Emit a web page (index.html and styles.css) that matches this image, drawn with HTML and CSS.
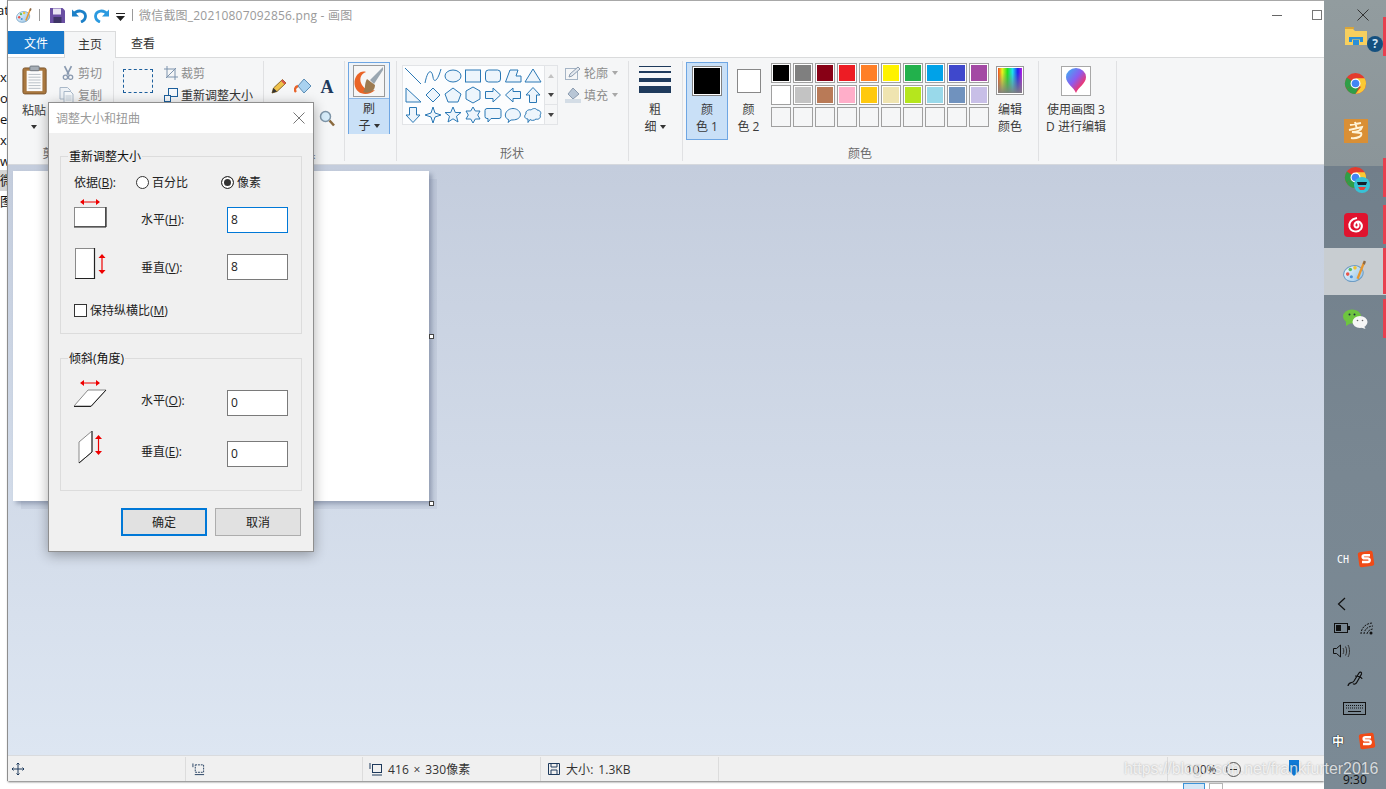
FILE: index.html
```html
<!DOCTYPE html>
<html lang="zh">
<head>
<meta charset="utf-8">
<title>画图</title>
<link rel="stylesheet" href="styles.css">
</head>
<body>
<svg class="defs" aria-hidden="true">
  <defs>
    <linearGradient id="gp" x1="0" y1="0" x2="1" y2="1"><stop offset="0" stop-color="#f4fbff"/><stop offset="1" stop-color="#8fc0e6"/></linearGradient>
    <linearGradient id="g3d" x1="0" y1="0" x2="1" y2="1"><stop offset="0" stop-color="#35b8f2"/><stop offset=".45" stop-color="#8b5cf0"/><stop offset=".75" stop-color="#f0356e"/><stop offset="1" stop-color="#f7a81c"/></linearGradient>
    <symbol id="chrome" viewBox="0 0 24 24">
      <circle cx="12" cy="12" r="11" fill="#e33b2e"/>
      <path d="M12 12 2.500 17.500A11 11 0 0 1 3 5.700Z" fill="#2f9e47"/>
      <path d="M2.500 17.500A11 11 0 0 0 12 23L17.500 12H12Z" fill="#2f9e47"/>
      <path d="M23 12A11 11 0 0 0 21.500 6.500H12l5.500 9.500L12 23A11 11 0 0 0 23 12Z" fill="#fbc934"/>
      <circle cx="12" cy="12" r="5.200" fill="#fff"/>
      <circle cx="12" cy="12" r="4" fill="#4286f5"/>
    </symbol>
    <symbol id="sogou" viewBox="0 0 18 18">
      <rect x="1.500" y="1.500" width="15" height="15" rx="2" fill="#f04b17" transform="rotate(-8 9 9)"/>
      <path d="M13 5.200H7.500C5 5.200 5 8.400 7.500 8.400h3.400c2.500 0 2.400 3.600-.2 3.600H5" fill="none" stroke="#fff" stroke-width="2.400"/>
    </symbol>
    <symbol id="palette" viewBox="0 0 24 24">
      <ellipse cx="10" cy="14" rx="9.500" ry="7.500" fill="url(#gp)" stroke="#6d9cc4" transform="rotate(-15 10 14)"/>
      <circle cx="4.500" cy="14.500" r="1.700" fill="#e8564a"/><circle cx="7" cy="10" r="1.700" fill="#5dbb63"/><circle cx="11.500" cy="8.500" r="1.700" fill="#f2c230"/><circle cx="8" cy="17" r="1.500" fill="#4a90d9"/>
      <path d="M20.500 2.500 14 19" stroke="#e8962f" stroke-width="2.200"/><path d="M20 1.500l2 1-1 3-2-1Z" fill="#8a6a4a"/>
    </symbol>
  </defs>
</svg>

<div class="backlist">
  <span class="bl-top">at</span>
  <span>xl</span><span>or</span><span>ex</span><span>xl</span><span>w</span>
  <span class="bl-sel">微</span><span>图</span>
</div>

<main class="window">
  <header class="titlebar">
    <svg class="qa qa-logo" width="17" height="17"><use href="#palette"/></svg>
    <i class="qa-sep"></i>
    <svg class="qa" width="15" height="15" viewBox="0 0 15 15"><path d="M0 0H12.500L15 2.500V15H0Z" fill="#6a4fa3"/><rect x="3" y="0.500" width="8" height="6" fill="#e8e4f2"/><rect x="3.500" y="9" width="8" height="6" fill="#3e3566"/></svg>
    <svg class="qa" width="15" height="15" viewBox="0 0 15 15"><path d="M2 6C5 1.500 13 2 13.500 8 13.500 11 11.500 13 9 14" fill="none" stroke="#1c80c8" stroke-width="2.800"/><path d="M0 1.500V8.500H7Z" fill="#1c80c8"/></svg>
    <svg class="qa" width="15" height="15" viewBox="0 0 15 15"><path d="M13 6C10 1.500 2 2 1.500 8 1.500 11 3.500 13 6 14" fill="none" stroke="#2b9ae0" stroke-width="2.800"/><path d="M15 1.500V8.500H8Z" fill="#2b9ae0"/></svg>
    <svg class="qa qa-more" width="9" height="8" viewBox="0 0 9 8"><path d="M0 0H9V1H0ZM0 3H9L4.500 8Z" fill="#222"/></svg>
    <i class="qa-sep qa-sep2"></i>
    <span class="doc-title">微信截图_20210807092856.png - 画图</span>
    <span class="win-btns">
      <i class="min"></i>
      <i class="max"></i>
    </span>
  </header>

  <nav class="tabs">
    <span class="tab tab-file">文件</span>
    <span class="tab tab-on">主页</span>
    <span class="tab tab-view">查看</span>
  </nav>

  <section class="ribbon">
    <div class="rg rg-clip">
      <div class="rg-body">
        <div class="big-col paste">
          <svg class="paste-ico" width="26" height="32" viewBox="0 0 28 32"><rect x="1" y="3" width="25" height="28" rx="2" fill="#a8773f" stroke="#7b5329"/><rect x="5" y="6" width="17" height="22" fill="#fbfbfb"/><path d="M7 10H20M7 13H20M7 16H20M7 19H20M7 22H20M7 25H20" stroke="#b5bcc4"/><rect x="8.500" y="1" width="10" height="5" rx="1" fill="#a5adb5" stroke="#6d7680"/></svg>
          <span class="big-txt paste-txt">粘贴</span>
          <i class="caret"></i>
        </div>
        <div class="small-col">
          <div class="srow dim"><svg width="12" height="18" viewBox="0 0 14 18"><path d="M3 1 8 11M11 1 6 11" stroke="#8a9ab0" stroke-width="2"/><circle cx="4" cy="14" r="2.500" fill="none" stroke="#8a9ab0" stroke-width="1.500"/><circle cx="10" cy="14" r="2.500" fill="none" stroke="#8a9ab0" stroke-width="1.500"/></svg><span>剪切</span></div>
          <div class="srow dim"><svg class="copy-ico" width="15" height="16" viewBox="0 0 14 16"><path d="M.5.500H8L11 3.500V12H.5Z" fill="#eef2f6" stroke="#a9b8c8"/><path d="M4.500 4.500H11L13.500 7V15.500H4.500Z" fill="#f5f8fa" stroke="#a9b8c8"/><path d="M6 9H12M6 11H12M6 13H12" stroke="#c0ccd8"/></svg><span>复制</span></div>
        </div>
      </div>
      <div class="rg-label">剪贴板</div>
    </div>

    <div class="rg rg-image">
      <div class="rg-body">
        <div class="select-col"><i class="select-ico"></i></div>
        <div class="small-col">
          <div class="srow dim"><svg width="14" height="14" viewBox="0 0 14 14"><path d="M3 0V11H14M0 3H11V14M2 12 12 2" fill="none" stroke="#7d93ad"/></svg><span>裁剪</span></div>
          <div class="srow"><svg width="14" height="14" viewBox="0 0 14 14"><rect x="4.500" y=".5" width="9" height="8" fill="#f5f8fb" stroke="#1c5f9c"/><rect x=".5" y="7.500" width="6" height="6" fill="#f5f8fb" stroke="#1c5f9c"/></svg><span>重新调整大小</span></div>
        </div>
      </div>
      <div class="rg-label">图像</div>
    </div>

    <div class="rg rg-tools">
      <div class="rg-body tools-grid">
        <svg width="16" height="16" viewBox="0 0 16 16"><path d="M1 15 2.500 10 11.500 1.500 15 5 6 13.500Z" fill="#f0c24a" stroke="#8a6a2a"/><path d="M11.500 1.500 15 5 13.500 6.500 10 3Z" fill="#d8564a"/><path d="M1 15 2.500 10 6 13.500Z" fill="#333"/></svg>
        <svg width="18" height="16" viewBox="0 0 18 16"><path d="M10 1 17 8 10 15 4 8Z" fill="#a9d2f0" stroke="#5b8db5"/><path d="M4 8C1 9 0 12 2 14" fill="none" stroke="#e8642c" stroke-width="2.400"/></svg>
        <svg width="16" height="15" viewBox="0 0 16 15"><text class="tool-a" x="8" y="14" text-anchor="middle">A</text></svg>
        <i></i><i></i>
        <svg width="16" height="17" viewBox="0 0 16 17"><circle cx="6.500" cy="6.500" r="5" fill="#d6ecfa" stroke="#7e95a8" stroke-width="1.500"/><path d="M10.500 10.500 15 15.500" stroke="#8a6a3e" stroke-width="2.600"/></svg>
      </div>
      <div class="rg-label">工具</div>
    </div>

    <div class="rg rg-brush">
      <div class="rg-body">
        <div class="brush-btn">
          <div class="brush-top">
            <svg width="32" height="32" viewBox="0 0 32 32"><rect x=".5" y=".5" width="31" height="31" fill="#f6f6f6" stroke="#9a9a9a"/><path d="M1.500 19C1 10 8 5 13 7 7 9 6 15 9 20 12 25 18 26 22 25 16 31 3 31 1.500 19Z" fill="#ea6426"/><path d="M30 2 17 15 21 19 30 5Z" fill="#9aa6b0"/><path d="M14 14 22 20C22 27 15 29 10 27 13 24 11 19 14 14Z" fill="#9c7a50"/></svg>
          </div>
          <div class="brush-bot"><span>刷</span><span>子<i class="caret caret-in"></i></span></div>
        </div>
      </div>
    </div>

    <div class="rg rg-shapes">
      <div class="rg-body">
        <div class="gallery">
          <div class="gal-grid">
            <svg viewBox="0 0 20 20"><path d="M2 2 18 18"/></svg>
            <svg viewBox="0 0 20 20"><path class="nf" d="M2 17C5 2 9 4 10 11S15 14 18 3"/></svg>
            <svg viewBox="0 0 20 20"><ellipse cx="10" cy="10" rx="8" ry="6"/></svg>
            <svg viewBox="0 0 20 20"><rect x="2.500" y="4" width="15" height="12"/></svg>
            <svg viewBox="0 0 20 20"><rect x="2.500" y="4" width="15" height="12" rx="3"/></svg>
            <svg viewBox="0 0 20 20"><path d="M2.500 16 7 4H15L13 10H18V16Z"/></svg>
            <svg viewBox="0 0 20 20"><path d="M10 3 18 16H2Z"/></svg>
            <svg viewBox="0 0 20 20"><path d="M3 3V17H18Z"/></svg>
            <svg viewBox="0 0 20 20"><path d="M10 3 17 10 10 17 3 10Z"/></svg>
            <svg viewBox="0 0 20 20"><path d="M10 3 18 9 15 17H5L2 9Z"/></svg>
            <svg viewBox="0 0 20 20"><path d="M10 2 17 6V14L10 18 3 14V6Z"/></svg>
            <svg viewBox="0 0 20 20"><path d="M2.500 6.500H10V3L17.500 10 10 17V13.500H2.500Z"/></svg>
            <svg viewBox="0 0 20 20"><path d="M17.500 6.500H10V3L2.500 10 10 17V13.500H17.500Z"/></svg>
            <svg viewBox="0 0 20 20"><path d="M6.500 17.500V10H3L10 2.500 17 10H13.500V17.500Z"/></svg>
            <svg viewBox="0 0 20 20"><path d="M6.500 2.500V10H3L10 17.500 17 10H13.500V2.500Z"/></svg>
            <svg viewBox="0 0 20 20"><path d="M10 2 12 8 18 10 12 12 10 18 8 12 2 10 8 8Z"/></svg>
            <svg viewBox="0 0 20 20"><path d="M10 2 12.300 7.500H18L13.500 11.200 15 17 10 13.800 5 17 6.500 11.200 2 7.500H7.700Z"/></svg>
            <svg viewBox="0 0 20 20"><path d="M10 2 12.300 6H17L14.700 10 17 14H12.300L10 18 7.700 14H3L5.300 10 3 6H7.700Z"/></svg>
            <svg viewBox="0 0 20 20"><path d="M4 3.500H16Q18 3.500 18 5.500V11.500Q18 13.500 16 13.500H8L5 17V13.500H4Q2 13.500 2 11.500V5.500Q2 3.500 4 3.500Z"/></svg>
            <svg viewBox="0 0 20 20"><path d="M6 15C-1 12 3 3.500 10 3.500S21 12 13 14.500C11 15 9 15 8 15L5 17.500Z"/></svg>
            <svg viewBox="0 0 20 20"><path d="M5 14C1 14 1 10 3 9 2 6 6 4 8 5 10 3 13 3 14 5 17 5 19 8 17 10 18.500 13 15 15 13 14 11 16 8 15.500 7 14.500L5 17.500Z"/></svg>
          </div>
          <div class="gal-scroll">
            <span class="gs-off"><i class="tri-up"></i></span>
            <span><i class="tri-down"></i></span>
            <span class="gs-more"><i class="tri-more"></i></span>
          </div>
        </div>
        <div class="small-col shape-opts">
          <div class="srow dim"><svg width="16" height="14" viewBox="0 0 16 14"><rect x=".5" y="2.500" width="12" height="11" fill="none" stroke="#a5b4c5"/><path d="M4 11 5 8 13 1 15 3 7 10Z" fill="#e4e9ef" stroke="#8c9cb0"/></svg><span>轮廓</span><i class="caret caret-dim"></i></div>
          <div class="srow dim"><svg width="16" height="16" viewBox="0 0 16 16"><path d="M8 1 14 7 8 12 3 7Z" fill="#b8c6d6" stroke="#8c9cb0"/><rect y="12" width="16" height="4" fill="#d4dde6"/></svg><span>填充</span><i class="caret caret-dim"></i></div>
        </div>
      </div>
      <div class="rg-label">形状</div>
    </div>

    <div class="rg rg-size">
      <div class="rg-body col-center">
        <div class="size-lines"><i class="l1"></i><i class="l2"></i><i class="l3"></i><i class="l4"></i></div>
        <span class="big-txt">粗</span>
        <span class="big-txt">细<i class="caret caret-in"></i></span>
      </div>
    </div>

    <div class="rg rg-colors">
      <div class="rg-body">
        <div class="color-btn color-on">
          <i class="sw-big"></i>
          <span class="big-txt">颜</span>
          <span class="big-txt">色 1</span>
        </div>
        <div class="color-btn color-two">
          <i class="sw-mid"></i>
          <span class="big-txt">颜</span>
          <span class="big-txt">色 2</span>
        </div>
        <div class="palette">
          <i class="c c1"></i><i class="c c2"></i><i class="c c3"></i><i class="c c4"></i><i class="c c5"></i><i class="c c6"></i><i class="c c7"></i><i class="c c8"></i><i class="c c9"></i><i class="c c10"></i>
          <i class="c c11"></i><i class="c c12"></i><i class="c c13"></i><i class="c c14"></i><i class="c c15"></i><i class="c c16"></i><i class="c c17"></i><i class="c c18"></i><i class="c c19"></i><i class="c c20"></i>
          <i class="c"></i><i class="c"></i><i class="c"></i><i class="c"></i><i class="c"></i><i class="c"></i><i class="c"></i><i class="c"></i><i class="c"></i><i class="c"></i>
        </div>
        <div class="edit-colors">
          <i class="rainbow"></i>
          <span class="big-txt">编辑</span>
          <span class="big-txt">颜色</span>
        </div>
      </div>
      <div class="rg-label">颜色</div>
    </div>

    <div class="rg rg-3d">
      <div class="rg-body col-center">
        <div class="p3d-ico"><svg width="20" height="26" viewBox="0 0 20 26"><path d="M10 25C8 19 0 16 0 9A10 9 0 0 1 20 9C20 16 12 19 10 25Z" fill="url(#g3d)"/></svg></div>
        <span class="big-txt p3d-txt">使用画图 3<br>D 进行编辑</span>
      </div>
    </div>
  </section>

  <section class="workspace">
    <div class="canvas">
      <i class="handle h-r"></i>
      <i class="handle h-c"></i>
    </div>
  </section>

  <footer class="status">
    <div class="cell cell-a"><svg width="12" height="12" viewBox="0 0 12 12"><path d="M6 0V12M0 6H12M4.500 1.500 6 0 7.500 1.500M4.500 10.500 6 12 7.500 10.500M1.500 4.500 0 6 1.500 7.500M10.500 4.500 12 6 10.500 7.500" fill="none" stroke="#1e3a5c"/></svg></div>
    <div class="cell cell-a"><svg width="13" height="13" viewBox="0 0 14 13"><path d="M3.500 1.500H12.500V9.500H3.500Z" fill="none" stroke="#1e3a5c" stroke-dasharray="2 1"/><path d="M1 0V4M3 12H13" stroke="#1e3a5c"/></svg></div>
    <div class="cell cell-a"><svg width="14" height="13" viewBox="0 0 14 13"><rect x="3.500" y="1.500" width="9" height="8" fill="none" stroke="#1e3a5c"/><path d="M1 0V6M3 12H13" stroke="#1e3a5c"/></svg><span class="stat-t">416 × 330像素</span></div>
    <div class="cell cell-a"><svg width="12" height="12" viewBox="0 0 12 12"><path d="M.5.500H11.500V11.500H.5ZM3 .5V4H9V.5M3 11.500V7H9V11.500" fill="none" stroke="#1e3a5c"/></svg><span class="stat-t">大小: 1.3KB</span></div>
    <div class="cell cell-wide"></div>
    <div class="cell cell-zoom">
      <span class="zoom-t">100%</span>
      <span class="zoom-minus"></span>
      <svg class="zoom-thumb" width="10" height="16" viewBox="0 0 10 16"><path d="M0 0H10V11L5 16 0 11Z" fill="#0f7ad6"/></svg>
    </div>
  </footer>
</main>

<div class="dialog">
  <div class="dlg-title"><span>调整大小和扭曲</span>
    <svg width="12" height="12" viewBox="0 0 12 12"><path d="M.5.500 11.500 11.500M11.500.5 .5 11.500" stroke="#777" fill="none"/></svg>
  </div>
  <div class="dlg-body">
    <div class="fs fs-a">
      <span class="legend">重新调整大小</span>
      <div class="by-row">
        <span class="by-label">依据(<u>B</u>):</span>
        <span class="radio-item radio-a"><i class="radio"></i>百分比</span>
        <span class="radio-item radio-b"><i class="radio radio-on"></i>像素</span>
      </div>
      <div class="dim-row dim-w">
        <svg class="dim-ico" width="34" height="46" viewBox="0 0 34 46"><rect x="1.500" y="10.500" width="31" height="19" fill="#fff" stroke="#8a8a8a"/><path d="M1 30H33M33 10V30" stroke="#222" stroke-width="1.200"/><path d="M8 5H26" stroke="#e00"/><path d="M11 2 7 5 11 8ZM23 2 27 5 23 8Z" fill="#e00"/></svg>
        <label class="dim-label">水平(<u>H</u>):</label>
        <span class="inp inp-on">8</span>
      </div>
      <div class="dim-row dim-row2">
        <svg class="dim-ico" width="34" height="46" viewBox="0 0 34 46"><rect x="2.500" y="4.500" width="19" height="30" fill="#fff" stroke="#8a8a8a"/><path d="M21.500 4V35M2 34.500H22" stroke="#222" stroke-width="1.200"/><path d="M29 12V28" stroke="#e00" stroke-width="1.200"/><path d="M25.500 14 29 10 32.500 14ZM25.500 26 29 30 32.500 26Z" fill="#e00"/></svg>
        <label class="dim-label">垂直(<u>V</u>):</label>
        <span class="inp">8</span>
      </div>
      <div class="check-row"><i class="check"></i><span>保持纵横比(<u>M</u>)</span></div>
    </div>

    <div class="fs fs-b">
      <span class="legend">倾斜(角度)</span>
      <div class="dim-row dim-s1">
        <svg class="dim-ico" width="34" height="46" viewBox="0 0 34 46"><path d="M1 26 15 10H33L18 26Z" fill="#fff" stroke="#8a8a8a"/><path d="M1 26.500H18L33 10" stroke="#222" fill="none"/><path d="M8 3H26" stroke="#e00"/><path d="M11 0 7 3 11 6ZM23 0 27 3 23 6Z" fill="#e00"/></svg>
        <label class="dim-label">水平(<u>O</u>):</label>
        <span class="inp">0</span>
      </div>
      <div class="dim-row dim-row3">
        <svg class="dim-ico" width="34" height="46" viewBox="0 0 34 46"><path d="M6 11 19 0V21L6 32Z" fill="#fff" stroke="#8a8a8a"/><path d="M19 0V21L6 32" stroke="#222" fill="none"/><path d="M25.500 6V22" stroke="#e00" stroke-width="1.200"/><path d="M22 8 25.500 4 29 8ZM22 20 25.500 24 29 20Z" fill="#e00"/></svg>
        <label class="dim-label">垂直(<u>E</u>):</label>
        <span class="inp">0</span>
      </div>
    </div>

    <div class="dlg-btns">
      <button class="btn btn-primary" type="button">确定</button>
      <button class="btn" type="button">取消</button>
    </div>
  </div>
</div>

<aside class="taskbar">
  <div class="tb-close"><svg width="12" height="12" viewBox="0 0 12 12"><path d="M.5.500 11.500 11.500M11.500.5 .5 11.500" stroke="#333" fill="none"/></svg></div>
  <div class="tb-apps">
    <div class="tb-item run">
      <svg width="22" height="20" viewBox="0 0 22 20"><path d="M0 2H8L10 4H22V18H0Z" fill="#f7cf5e"/><rect y="0" width="9" height="2" fill="#d9a53a"/><path d="M4 15V10H18V15H15V12.500H7V15Z" fill="#2a8fd8"/><rect x="8" y="13" width="6" height="5" fill="#2a8fd8"/></svg>
      <span class="help">?</span>
    </div>
    <div class="tb-item"><svg width="23" height="23"><use href="#chrome"/></svg></div>
    <div class="tb-item"><div class="app-y"><svg width="18" height="20" viewBox="0 0 18 20"><path d="M3 4 14 2M8 1 10 8M2 9 15 6C14 10 9 11 5 11L14 12C16 15 10 18 4 17" fill="none" stroke="#fff3d6" stroke-width="2"/></svg></div></div>
    <div class="tb-item run">
      <svg width="23" height="23"><use href="#chrome"/></svg>
      <svg class="badge-face" width="16" height="16" viewBox="0 0 16 16"><circle cx="8" cy="8" r="8" fill="#38c2d6"/><path d="M3 5H13L12 8H4Z" fill="#15202c"/><path d="M4 10H12L10 13H6Z" fill="#e0443c"/></svg>
    </div>
    <div class="tb-item run"><div class="app-n"><svg width="18" height="18" viewBox="0 0 18 18"><path d="M10 2C4 3 1.500 7 2.500 11 4 16 11 17 14 13 16.500 9 13 4.500 9.500 6 6.500 7.500 7 11.500 9.500 11.500 12 11.500 12 8 10.500 6.500" fill="none" stroke="#fff" stroke-width="2"/></svg></div></div>
    <div class="tb-item run active"><svg width="25" height="25"><use href="#palette"/></svg></div>
    <div class="tb-item run">
      <svg width="25" height="20" viewBox="0 0 25 20"><ellipse cx="9" cy="7.500" rx="9" ry="7" fill="#6ec540"/><path d="M3 12 3 17 8 14Z" fill="#6ec540"/><ellipse cx="17" cy="13" rx="7.500" ry="6" fill="#f6f6f6"/><path d="M21 17 22.500 20 18 18.500Z" fill="#f6f6f6"/><circle cx="6.500" cy="5.500" r="1" fill="#234"/><circle cx="11.500" cy="5.500" r="1" fill="#234"/><circle cx="14.500" cy="11.500" r=".8" fill="#666"/><circle cx="19.500" cy="11.500" r=".8" fill="#666"/></svg>
    </div>
  </div>
  <div class="tray">
    <div class="tray-row tr-ch"><span class="ch">CH</span><svg width="18" height="18"><use href="#sogou"/></svg></div>
    <div class="tray-row tr-back"><svg width="9" height="14" viewBox="0 0 9 14"><path d="M8 1 1.500 7 8 13" fill="none" stroke="#111" stroke-width="1.200"/></svg></div>
    <div class="tray-row tr-net">
      <svg width="16" height="10" viewBox="0 0 16 10"><rect x=".5" y=".5" width="13" height="9" fill="none" stroke="#111"/><rect x="2" y="2" width="5" height="6" fill="#111"/><rect x="14" y="3" width="2" height="4" fill="#111"/></svg>
      <svg width="14" height="13" viewBox="0 0 14 13"><path d="M1 12C1 6 6 1 13 1M4 12C4 8 8 4 13 4M7 12C7 10 10 7 13 7" fill="none" stroke="#111" stroke-dasharray="2 1"/><circle cx="11" cy="11" r="1.500" fill="#111"/></svg>
    </div>
    <div class="tray-row tr-vol"><svg width="17" height="14" viewBox="0 0 17 14"><path d="M.5 4.500H3.500L7.500 1V13L3.500 9.500H.5Z" fill="none" stroke="#111"/><path d="M10 4C11 6 11 8 10 10M12.500 2.500C14 5 14 9 12.500 11.500M15 1C17 4.500 17 9.500 15 13" fill="none" stroke="#333"/></svg></div>
    <div class="tray-row tr-pen"><svg width="17" height="17" viewBox="0 0 17 17"><path d="M1 15C2 10 5 13 7 10L12 2C13 .5 15 1 14.500 3L10 11C9 13 7 14 6 12.500M8 5C11 5 15 6 15 8" fill="none" stroke="#111" stroke-width="1.200"/></svg></div>
    <div class="tray-row tr-kb"><svg width="23" height="13" viewBox="0 0 23 13"><rect x=".5" y=".5" width="22" height="12" fill="none" stroke="#111"/><path d="M3 3.500H20M3 6H20" stroke="#111" stroke-dasharray="1 1"/><path d="M5 9.500H18" stroke="#111"/></svg></div>
    <div class="tray-row tr-ime"><span class="zh">中</span><svg width="18" height="18"><use href="#sogou"/></svg></div>
    <div class="tray-time">9:30</div>
  </div>
  <i class="zoom-plus"></i>
</aside>

<i class="frag frag-a"></i>
<i class="frag frag-b"></i>
<div class="watermark">https://blog.csdn.net/frankfurter2016</div>
</body>
</html>
```

FILE: styles.css
```css
* { box-sizing: border-box; }
html, body { margin: 0; padding: 0; }
body {
  position: relative;
  width: 1386px;
  height: 789px;
  overflow: hidden;
  background: #fff;
  font-family: "Open Sans", "Noto Sans CJK SC", sans-serif;
  font-size: 12px;
  line-height: 17px;
  color: #333;
}
i { display: block; font-style: normal; }
svg { display: block; flex: none; }
.defs { position: absolute; width: 0; height: 0; }

/* desktop fragment left of the window */
.backlist {
  position: absolute;
  left: 0; top: 0;
  width: 8px; height: 230px;
  overflow: hidden;
  display: flex;
  flex-direction: column;
  padding-top: 67px;
  font-size: 13px;
  line-height: 21px;
  color: #111;
}
.backlist span { display: block; height: 21px; white-space: nowrap; overflow: hidden; flex: none; }
.backlist .bl-top { position: absolute; top: 0; left: -3px; overflow: visible; }
.bl-sel { background: #d5d5d5; margin-top: -2px; }

/* window */
.window {
  position: absolute;
  left: 8px; top: 0;
  width: 1316px; height: 781px;
  background: #fff;
  border-top: 1px solid #a8a8a8;
  box-shadow: -1px 0 0 #8e8e8e, 0 1px 2px rgba(0,0,0,.55);
  display: flex;
  flex-direction: column;
}
.titlebar {
  height: 30px;
  display: flex;
  align-items: center;
  padding: 0 0 2px 8px;
  flex: none;
  background: #fff;
}
.qa { margin-right: 7px; }
.qa-logo { margin-right: 6px; }
.qa-sep { width: 1px; height: 12px; background: #9a9a9a; margin-right: 10px; }
.qa-more { margin-right: 7px; margin-top: 3px; }
.qa-sep2 { margin-right: 6px; }
.doc-title { color: #9a9a9a; white-space: nowrap; letter-spacing: .2px; }
.win-btns {
  margin-left: auto;
  display: flex;
  align-items: center;
  gap: 30px;
  padding-right: 2px;
}
.min { width: 10px; height: 1px; background: #666; }
.max { width: 10px; height: 10px; border: 1px solid #777; }

.tabs { height: 26px; display: flex; flex: none; background: #fff; position: relative; z-index: 1; }
.tab { width: 56px; height: 23px; line-height: 25px; text-align: center; color: #333; }
.tab-file { background: #1979ca; color: #fff; }
.tab-on {
  width: 52px; height: 27px; line-height: 25px;
  background: #f5f6f7;
  border: 1px solid #dadbdc;
  border-bottom: 0;
}
.tab-view { width: 54px; }

.ribbon {
  height: 108px;
  flex: none;
  display: flex;
  background: #f5f6f7;
  border-top: 1px solid #dadbdc;
  border-bottom: 1px solid #d5d8dd;
}
.rg {
  position: relative;
  display: flex;
  flex-direction: column;
  flex: none;
  padding-top: 4px;
}
.rg::after {
  content: "";
  position: absolute;
  right: -1px; top: 3px; bottom: 3px;
  width: 1px;
  background: #e0e1e3;
}
.rg-body { flex: 1; display: flex; align-items: flex-start; min-height: 0; }
.rg-label { height: 20px; margin-bottom: -1px; line-height: 18px; text-align: center; color: #6a6a6a; flex: none; }
.rg-clip { width: 105px; }
.rg-image { width: 150px; }
.rg-tools { width: 81px; }
.rg-brush { width: 52px; }
.rg-shapes { width: 232px; }
.rg-size { width: 54px; }
.rg-colors { width: 356px; }
.rg-3d { width: 78px; padding-right: 2px; }

.big-txt { display: block; text-align: center; line-height: 17px; color: #3a3a3a; white-space: nowrap; }
.big-col { display: flex; flex-direction: column; align-items: center; }
.paste { width: 40px; padding-top: 2px; margin-left: 6px; }
.paste-ico { margin-left: 1px; }
.paste-txt { margin-top: 6px; }
.caret {
  width: 0; height: 0;
  border: 3px solid transparent;
  border-top: 4px solid #333;
  border-bottom: 0;
}
.paste .caret { margin-top: 6px; }
.caret-in { display: inline-block; margin-left: 3px; vertical-align: 2px; }
.caret-dim { border-top-color: #a8a8a8; margin-left: 1px; }
.small-col { display: flex; flex-direction: column; margin-left: 8px; }
.srow { height: 22px; display: flex; align-items: center; gap: 4px; white-space: nowrap; color: #333; }
.srow.dim { color: #8c8c8c; }
.copy-ico { margin-left: -3px; }

.select-col { width: 41px; padding: 7px 0 0 10px; }
.select-ico { width: 30px; height: 24px; border: 1px dashed #1c5f9c; }
.rg-image .small-col { margin-left: 10px; }
.rg-image .srow { gap: 3px; }

.tools-grid {
  display: grid;
  grid-template-columns: repeat(3, 24px);
  grid-auto-rows: 24px;
  row-gap: 8px;
  justify-items: center;
  align-items: center;
  padding: 12px 0 0 4px;
  align-content: start;
}
.tool-a { font-family: "Liberation Serif", serif; font-size: 18px; font-weight: 700; fill: #1e3a5c; }

.brush-btn { width: 42px; height: 72px; margin-left: 4px; border: 1px solid #6ea6e3; display: flex; flex-direction: column; }
.brush-top { height: 36px; padding: 2px 4px; background: #eef3f8; border-bottom: 1px solid #8eb8e6; }
.brush-bot { flex: 1; background: #c9e0f7; display: flex; flex-direction: column; align-items: center; padding-top: 1px; }

.gallery {
  width: 156px; height: 60px;
  margin: 3px 0 0 6px;
  background: #fcfdfe;
  border: 1px solid #e2e4e7;
  display: flex;
}
.gal-grid {
  width: 141px;
  display: grid;
  grid-template-columns: repeat(7, 20px);
  grid-auto-rows: 19.300px;
}
.gal-grid svg { width: 20px; height: 20px; fill: #edf5fc; stroke: #2a78b5; stroke-width: 1; }
.gal-grid .nf { fill: none; }
.gal-grid svg:first-child { fill: none; }
.gal-scroll { flex: 1; display: flex; flex-direction: column; border-left: 1px solid #e2e4e7; background: #f5f6f7; }
.gal-scroll span { flex: 1; display: flex; align-items: center; justify-content: center; }
.gs-more { border-top: 1px solid #e2e4e7; }
.tri-up { border: 3px solid transparent; border-bottom: 4px solid #c2c2c2; border-top: 0; }
.tri-down { border: 3px solid transparent; border-top: 4px solid #444; border-bottom: 0; }
.tri-more { border: 3px solid transparent; border-top: 4px solid #444; border-bottom: 0; box-shadow: 0 -3px 0 -2px #444; }
.shape-opts { margin-left: 7px; }
.shape-opts .srow { gap: 3px; }

.col-center { flex-direction: column; align-items: center; }
.size-lines { width: 32px; height: 27px; margin: 4px 0 8px; display: flex; flex-direction: column; justify-content: space-between; }
.size-lines i { background: #1e3a5c; }
.l1 { height: 1px; } .l2 { height: 2px; } .l3 { height: 4px; } .l4 { height: 7px; }

.color-btn { display: flex; flex-direction: column; align-items: center; flex: none; }
.color-on {
  width: 42px; height: 78px;
  margin-left: 4px;
  background: #c9e0f7;
  border: 1px solid #6ea6e3;
  padding-top: 3px;
}
.sw-big { width: 30px; height: 30px; margin-bottom: 5px; background: #000; border: 1px solid #808080; box-shadow: inset 0 0 0 1px #fff; }
.color-two { width: 41px; padding-top: 7px; }
.sw-mid { width: 24px; height: 24px; margin-bottom: 8px; background: #fff; border: 1px solid #888; }
.palette {
  display: grid;
  grid-template-columns: repeat(10, 20px);
  grid-auto-rows: 20px;
  gap: 2px;
  margin: 1px 0 0 2px;
}
.c { border: 1px solid #a0a0a0; box-shadow: inset 0 0 0 1px #fff; background: #f5f6f7; }
.palette .c:nth-child(n+21) { box-shadow: none; }
.c1 { background: #000; } .c2 { background: #7f7f7f; } .c3 { background: #880015; } .c4 { background: #ed1c24; } .c5 { background: #ff7f27; }
.c6 { background: #fff200; } .c7 { background: #22b14c; } .c8 { background: #00a2e8; } .c9 { background: #3f48cc; } .c10 { background: #a349a4; }
.c11 { background: #fff; } .c12 { background: #c3c3c3; } .c13 { background: #b97a57; } .c14 { background: #ffaec9; } .c15 { background: #ffc90e; }
.c16 { background: #efe4b0; } .c17 { background: #b5e61d; } .c18 { background: #99d9ea; } .c19 { background: #7092be; } .c20 { background: #c8bfe7; }
.edit-colors { width: 40px; margin-left: 1px; display: flex; flex-direction: column; align-items: center; padding-top: 4px; }
.rainbow {
  width: 28px; height: 29px;
  margin-bottom: 6px;
  border: 1px solid #999;
  box-shadow: inset 0 0 0 1px #fff;
  background:
    linear-gradient(to bottom, rgba(128,128,128,0) 20%, rgba(128,128,128,1) 100%),
    linear-gradient(to right, #f02020, #f0f020, #20e020, #20e0f0, #2020f0, #e020e0);
}
.p3d-ico { width: 30px; height: 30px; margin: 4px 0 5px; background: #fff; border: 1px solid #a8a8a8; display: flex; align-items: center; justify-content: center; }

/* workspace */
.workspace {
  flex: 1;
  min-height: 0;
  background: linear-gradient(to bottom, #c4cddd, #dde6f2);
  padding: 6px 0 0 5px;
  position: relative;
}
.canvas {
  position: relative;
  width: 416px; height: 330px;
  background: #fff;
  box-shadow: 3px 3px 4px rgba(90,105,130,.45), 8px 8px 0 rgba(120,135,165,.12);
}
.handle { position: absolute; width: 5px; height: 5px; background: #fff; border: 1px solid #444; }
.h-r { left: 416px; top: 163px; }
.h-c { left: 416px; top: 330px; }

/* status bar */
.status {
  height: 26px;
  flex: none;
  display: flex;
  align-items: stretch;
  background: #f0f0f0;
  border-top: 1px solid #d9dbde;
  padding-top: 1px;
}
.cell { display: flex; align-items: center; border-right: 1px solid #dcdcdc; padding-left: 4px; gap: 6px; white-space: nowrap; flex: none; color: #333; }
.cell-a { width: 178px; }
.cell-a:nth-child(2) { padding-left: 6px; width: 177px; }
.cell-a:nth-child(3) { padding-left: 6px; gap: 5px; }
.cell-a:nth-child(4) { padding-left: 7px; }
.stat-t { word-spacing: 1.500px; letter-spacing: .1px; }
.cell-wide { width: 449px; }
.cell-zoom { flex: 1; border-right: 0; padding-left: 18px; gap: 0; }
.zoom-t { width: 37px; }
.zoom-minus { width: 15px; height: 15px; margin-left: 3px; border: 1px solid #555; border-radius: 50%; position: relative; background: #f0f0f0; }
.zoom-minus::after { content: ""; position: absolute; left: 3px; top: 6px; width: 7px; height: 1px; background: #333; }
.zoom-thumb { margin-left: 48px; margin-top: -3px; }

/* dialog */
.dialog {
  position: absolute;
  left: 48px; top: 102px;
  width: 266px; height: 450px;
  background: #f0f0f0;
  border: 1px solid #8f8f8f;
  box-shadow: 0 3px 12px rgba(0,0,0,.32);
  display: flex;
  flex-direction: column;
}
.dlg-title {
  height: 30px;
  flex: none;
  background: #fff;
  display: flex;
  align-items: center;
  justify-content: space-between;
  padding: 0 8px 0 7px;
  color: #9a9a9a;
}
.dlg-body { flex: 1; padding: 23px 11px 0; display: flex; flex-direction: column; }
.fs { position: relative; border: 1px solid #dcdcdc; padding-left: 13px; color: #222; }
.fs-a { height: 178px; padding-top: 15px; }
.fs-b { height: 133px; margin-top: 24px; padding-top: 21px; }
.legend { position: absolute; left: 7px; top: -9px; padding: 0 1px; background: #f0f0f0; color: #111; }
.by-row { height: 20px; display: flex; align-items: center; }
.by-label { width: 62px; }
.radio-item { display: flex; align-items: center; gap: 3px; }
.radio-a { width: 85px; }
.radio { width: 13px; height: 13px; border: 1px solid #333; border-radius: 50%; background: #fff; }
.radio-on { background: #333; box-shadow: inset 0 0 0 2px #fff; }
.dim-row { height: 46px; margin-top: 5px; display: flex; align-items: center; }
.dim-row2 { margin-top: 1px; }
.dim-row3 { margin-top: 5px; }
.fs-b .dim-s1 { margin-top: 0; }
.dim-ico { margin-right: 34px; margin-left: -1px; }
.dim-label { width: 86px; }
.dim-w .dim-label { margin-top: -2px; }
.fs-b .dim-label { margin-top: -5px; }
.inp {
  width: 61px; height: 26px;
  border: 1px solid #7a7a7a;
  background: #fff;
  padding-left: 3px;
  line-height: 24px;
  color: #222;
}
.inp-on { border-color: #0078d7; }
.check-row { height: 20px; margin-top: 10px; display: flex; align-items: center; gap: 3px; white-space: nowrap; }
.check { width: 13px; height: 13px; border: 1px solid #333; background: #fff; }
.dlg-btns { display: flex; justify-content: flex-end; gap: 8px; margin-top: 17px; padding-right: 1px; }
.btn {
  width: 86px; height: 28px;
  font: inherit;
  color: #222;
  background: #e1e1e1;
  border: 1px solid #adadad;
  padding: 0;
}
.btn-primary { border: 2px solid #0078d7; }

/* taskbar */
.taskbar {
  position: absolute;
  right: 0; top: 0;
  width: 62px; height: 789px;
  background: linear-gradient(to bottom, #929c9f 0, #8b9599 21%, #717f8b 21.100%, #798792 60%, #7b8a95 100%);
  display: flex;
  flex-direction: column;
}
.tb-close { position: absolute; left: 33px; top: 9px; }
.tb-apps { margin-top: 13px; flex: none; }
.tb-item { position: relative; height: 47px; display: flex; align-items: center; justify-content: center; padding-left: 1px; }
.tb-item.run::after {
  content: "";
  position: absolute;
  right: 0; top: 4px; bottom: 4px;
  width: 3px;
  background: #e8404f;
}
.tb-item.active { background: #c8cdd1; }
.tb-item.active::after { top: 0; bottom: 1px; }
.help {
  position: absolute;
  left: 43px; top: 23px;
  width: 16px; height: 16px;
  line-height: 16px;
  border-radius: 50%;
  background: #15507f;
  color: #cfe3f2;
  font-size: 12px;
  font-weight: 700;
  text-align: center;
}
.app-y { width: 24px; height: 24px; background: #d98f35; display: flex; align-items: center; justify-content: center; }
.app-n { width: 24px; height: 24px; border-radius: 4px; background: #e0132e; display: flex; align-items: center; justify-content: center; }
.badge-face { position: absolute; left: 30px; top: 23px; }
.tray { margin-top: 205px; display: flex; flex-direction: column; flex: none; }
.tray-row { height: 24px; display: flex; align-items: center; flex: none; }
.tr-ch { padding-left: 13px; gap: 7px; }
.ch { font-family: "DejaVu Sans Mono", monospace; font-size: 10px; color: #fff; width: 13px; }
.tr-back { margin-top: 21px; padding-left: 13px; }
.tr-net { padding-left: 10px; gap: 10px; }
.tr-vol { height: 22px; padding-left: 9px; }
.tr-pen { margin-top: 5px; padding-left: 23px; }
.tr-kb { margin-top: 5px; padding-left: 19px; }
.tr-ime { margin-top: 9px; padding-left: 8px; gap: 13px; }
.zh { color: #fff; font-size: 12px; font-weight: 700; width: 13px; text-shadow: 0 0 1px #000, 0 0 1px #000; }
.tray-time { margin-top: 19px; padding-left: 19px; height: 16px; line-height: 16px; color: #111; white-space: nowrap; }
.zoom-plus { position: absolute; left: 24px; top: 760px; width: 14px; height: 14px; border: 1px solid #5f6b74; border-radius: 50%; }

.frag { position: absolute; top: 783px; height: 6px; }
.frag-a { left: 1183px; width: 22px; border: 1px solid #3d93d8; background: #d6e8f7; border-bottom: 0; }
.frag-b { left: 1209px; width: 14px; border: 1px solid #b5b5b5; border-bottom: 0; }

.watermark {
  position: absolute;
  left: 1124px; top: 758px;
  font-family: "Liberation Sans", sans-serif;
  font-size: 15.900px;
  line-height: 22px;
  letter-spacing: 0;
  color: rgba(255,255,255,.75);
  text-shadow: 0 0 2px rgba(0,0,0,.3);
  white-space: nowrap;
}
```
